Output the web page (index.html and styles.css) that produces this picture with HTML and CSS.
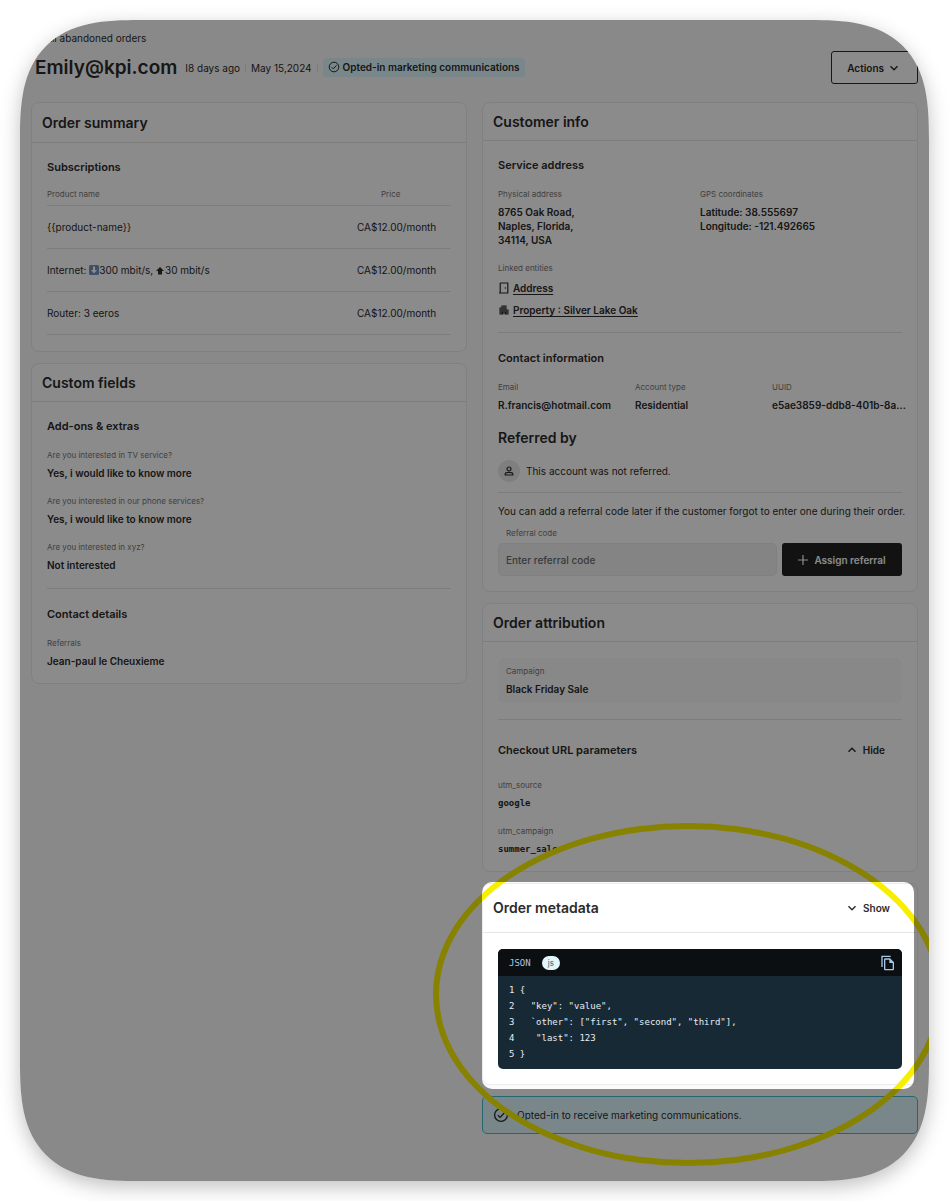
FILE: index.html
```html
<!DOCTYPE html>
<html lang="en">
<head>
<meta charset="utf-8">
<meta name="viewport" content="width=device-width, initial-scale=1">
<title>Abandoned order</title>
<link rel="stylesheet" href="styles.css">
</head>
<body>
<svg class="sprite" aria-hidden="true">
  <symbol id="check-circle" viewBox="0 0 24 24"><circle cx="12" cy="12" r="9.6" fill="none" stroke="currentColor" stroke-width="2"/><path d="M7.2 12.2l3.4 3.4 6.6-7" fill="none" stroke="currentColor" stroke-width="2"/></symbol>
  <symbol id="chevron" viewBox="0 0 10 10"><path d="M1.5 3.2L5 6.8l3.500-3.600" fill="none" stroke="currentColor" stroke-width="1.400"/></symbol>
</svg>
<main class="frame">
  <a class="back" href="#">All abandoned orders</a>
  <header class="top">
    <h1 class="title">Emily@kpi.com</h1>
    <span class="meta">I8 days ago</span>
    <span class="meta meta-split">May 15,2024</span>
    <span class="meta-split"><span class="badge"><svg class="icon-s"><use href="#check-circle"/></svg>Opted-in marketing communications</span></span>
    <button class="btn btn-outline" type="button">Actions<svg class="icon-xs"><use href="#chevron"/></svg></button>
  </header>

  <div class="columns">
    <div class="column">
      <section class="card summary">
        <h2 class="card-head">Order summary</h2>
        <div class="card-body">
          <h3 class="sub tight">Subscriptions</h3>
          <table class="items">
            <thead><tr><th>Product name</th><th class="price">Price</th></tr></thead>
            <tbody>
              <tr><td>{{product-name}}</td><td class="price">CA$12.00/month</td></tr>
              <tr><td>Internet: <svg class="emoji" viewBox="0 0 20 20"><rect width="20" height="20" rx="3" fill="#6f93bd"/><path d="M8 3h4v7h4l-6 7-6-7h4z" fill="#fff"/></svg>300 mbit/s, <svg class="arrow" viewBox="0 0 16 16"><path d="M8 0l8 8h-4v7H4V8H0z" fill="currentColor"/></svg>30 mbit/s</td><td class="price">CA$12.00/month</td></tr>
              <tr><td>Router: 3 eeros</td><td class="price">CA$12.00/month</td></tr>
            </tbody>
          </table>
        </div>
      </section>

      <section class="card">
        <h2 class="card-head">Custom fields</h2>
        <div class="card-body">
          <h3 class="sub">Add-ons &amp; extras</h3>
          <dl class="fields">
            <div><dt>Are you interested in TV service?</dt><dd>Yes, i would like to know more</dd></div>
            <div><dt>Are you interested in our phone services?</dt><dd>Yes, i would like to know more</dd></div>
            <div><dt>Are you interested in xyz?</dt><dd>Not interested</dd></div>
          </dl>
          <hr class="rule">
          <h3 class="sub">Contact details</h3>
          <dl class="fields">
            <div><dt>Referrals</dt><dd>Jean-paul le Cheuxieme</dd></div>
          </dl>
        </div>
      </section>
    </div>

    <div class="column">
      <section class="card">
        <h2 class="card-head">Customer info</h2>
        <div class="card-body">
          <h3 class="sub">Service address</h3>
          <dl class="fields two">
            <div><dt>Physical address</dt><dd>8765 Oak Road,<br>Naples, Florida,<br>34114, USA</dd></div>
            <div><dt>GPS coordinates</dt><dd>Latitude: 38.555697<br>Longitude: -121.492665</dd></div>
          </dl>
          <p class="label linked">Linked entities</p>
          <ul class="links">
            <li><svg class="icon-s" viewBox="0 0 12 12"><path d="M2.200 1h7.600v10H1m1.200 0V1M6.600 6h1.500" fill="none" stroke="currentColor" stroke-width="1.200"/></svg><a href="#">Address</a></li>
            <li><svg class="icon-s" viewBox="0 0 24 24"><path fill="currentColor" fill-rule="evenodd" d="M17 11V3H7v4H3v14h8v-4h2v4h8V11zM5 9v2h2V9zm0 4v2h2v-2zm0 4v2h2v-2zM9 5v2h2V5zm0 4v2h2V9zm0 4v2h2v-2zm4-8v2h2V5zm0 4v2h2V9zm0 4v2h2v-2zm4 0v2h2v-2zm0 4v2h2v-2z"/></svg><a href="#">Property : Silver Lake Oak</a></li>
          </ul>
          <hr class="rule rule-links">
          <h3 class="sub">Contact information</h3>
          <dl class="fields three">
            <div><dt>Email</dt><dd>R.francis@hotmail.com</dd></div>
            <div><dt>Account type</dt><dd>Residential</dd></div>
            <div><dt>UUID</dt><dd>e5ae3859-ddb8-401b-8a...</dd></div>
          </dl>
          <h2 class="referred">Referred by</h2>
          <p class="account"><span class="avatar"><svg class="icon-s" viewBox="0 0 12 12"><circle cx="6" cy="4" r="2" fill="none" stroke="currentColor" stroke-width="1.200"/><path d="M2.200 10V9.200C2.200 8 4.500 7.400 6 7.400S9.800 8 9.800 9.200v.8z" fill="none" stroke="currentColor" stroke-width="1.200"/></svg></span>This account was not referred.</p>
          <hr class="rule rule-tight">
          <p class="note">You can add a referral code later if the customer forgot to enter one during their order.</p>
          <label class="label code-label" for="referral">Referral code</label>
          <div class="form">
            <input class="input" id="referral" type="text" placeholder="Enter referral code">
            <button class="btn btn-dark" type="button"><svg class="icon-xs" viewBox="0 0 10 10"><path d="M5 0v10M0 5h10" stroke="currentColor" stroke-width="1.200"/></svg>Assign referral</button>
          </div>
        </div>
      </section>

      <section class="card">
        <h2 class="card-head">Order attribution</h2>
        <div class="card-body">
          <dl class="fields panel"><div><dt>Campaign</dt><dd>Black Friday Sale</dd></div></dl>
          <hr class="rule">
          <div class="params">
            <h3>Checkout URL parameters</h3>
            <button class="toggle" type="button"><svg class="icon-xs flip"><use href="#chevron"/></svg>Hide</button>
          </div>
          <dl class="fields mono">
            <div><dt>utm_source</dt><dd>google</dd></div>
            <div><dt>utm_campaign</dt><dd>summer_sale</dd></div>
          </dl>
        </div>
      </section>

      <section class="card focus">
        <div class="card-head card-head-tall">
          <h2>Order metadata</h2>
          <button class="toggle" type="button"><svg class="icon-xs"><use href="#chevron"/></svg>Show</button>
        </div>
        <div class="card-body">
          <div class="code">
            <div class="code-head">JSON <span class="pill">js</span>
              <button class="copy" type="button" aria-label="Copy"><svg viewBox="0 0 24 24"><path fill="currentColor" fill-rule="evenodd" d="M16 1H2v17h2V3h12zm-1 4H8c-1.100 0-1.990.9-1.990 2L6 21c0 1.100.89 2 1.990 2H19c1.100 0 2-.9 2-2V11zM8 21V7h6v5h5v9z"/></svg></button>
            </div>
            <pre class="code-body">1 {
2   "key": "value",
3   `other": ["first", "second", "third"],
4    "last": 123
5 }</pre>
          </div>
        </div>
        <div class="ring"></div>
        <div class="spotlight"></div>
      </section>

      <p class="alert"><svg class="icon-m"><use href="#check-circle"/></svg>Opted-in to receive marketing communications.</p>
    </div>
  </div>
</main>
</body>
</html>
```

FILE: styles.css
```css
* { box-sizing: border-box; }

body {
  margin: 0;
  padding: 20px;
  background: #fff;
  color: #2b2b2b;
  font: 10px/14px Inter, "Liberation Sans", sans-serif;
}

h1, h2, h3, p, dl, dd, ul, pre { margin: 0; }
ul { padding: 0; list-style: none; }
button, input { font: inherit; color: inherit; }
button { cursor: pointer; }
svg { flex: none; }

.sprite { position: absolute; width: 0; height: 0; }
.icon-xs { width: 10px; height: 10px; }
.icon-s { width: 12px; height: 12px; }
.icon-m { width: 16px; height: 16px; }
.flip { transform: rotate(180deg); }

.frame {
  position: relative;
  overflow: hidden;
  padding: 11px 11px 47px;
  border-radius: 87px;
  background: #fbfbfb;
  box-shadow: 0 6px 20px rgba(0, 0, 0, 0.25);
}

@supports (corner-shape: squircle) {
  .frame { border-radius: 120px; corner-shape: superellipse(1.5); }
}

.back {
  display: block;
  margin-left: 14px;
  color: inherit;
  text-decoration: none;
}

.top {
  display: flex;
  align-items: center;
  margin: 6px 0 18px 4px;
}

.title { margin-right: 8px; font-size: 19px; line-height: 24px; font-weight: 600; }
.meta { white-space: nowrap; }
.meta-split { display: flex; align-items: center; }
.meta-split::before {
  content: "";
  width: 1px;
  height: 10px;
  margin: 0 5px;
  background: #e4e4e4;
}

.badge {
  display: flex;
  align-items: center;
  gap: 3px;
  padding: 2px 5px 3px;
  border-radius: 3px;
  background: #e0f7fd;
  font-weight: 600;
  white-space: nowrap;
}

.btn {
  display: flex;
  align-items: center;
  justify-content: center;
  height: 33px;
  border-radius: 3px;
  font-weight: 600;
}
.btn-outline { gap: 5px; margin-left: auto; padding: 0 18px 0 15px; border: 1px solid #2b2b2b; background: #fff; }
.btn-dark { gap: 6px; flex: 0 0 120px; border: 0; background: #212121; color: #fff; }

.columns { display: grid; grid-template-columns: 1fr 1fr; gap: 15px; align-items: start; }
.column { display: flex; flex-direction: column; gap: 11px; min-width: 0; }

.card { border: 1px solid #ebebeb; border-radius: 8px; background: #fff; }
.card-head {
  padding: 9px 10px;
  border-bottom: 1px solid #e6e6e6;
  font-size: 14px;
  line-height: 19px;
  font-weight: 600;
}
.card-head-tall { display: flex; align-items: center; justify-content: space-between; padding: 14px 27px 15px 10px; }
.card-head-tall h2, .referred { font-size: 14px; line-height: 19px; font-weight: 600; }
.card-body { padding: 16px 15px 15px; }
.summary .card-head { padding: 10px; }
.summary .card-body { padding-bottom: 16px; }

.sub, .params h3 { font-size: 11px; line-height: 16px; font-weight: 600; }
.sub { margin-bottom: 14px; }
.tight { margin-bottom: 8px; }

.items { width: 100%; border-collapse: collapse; }
.items th, .items td { padding: 0; border-bottom: 1px solid #e6e6e6; text-align: left; }
.items th { height: 22px; color: #777; font-size: 8px; font-weight: 400; }
.items td { height: 43px; }
.items .price { width: 94px; }
.items th.price { padding-left: 24px; }
.emoji { width: 10px; height: 10px; vertical-align: -1px; }
.arrow { width: 8px; height: 8px; vertical-align: -1px; margin-right: 1px; }

.fields { display: grid; row-gap: 14px; }
.fields dt, .label { color: #777; font-size: 8px; line-height: 14px; }
.fields dd { margin-top: 4px; font-weight: 600; white-space: nowrap; }
.two { grid-template-columns: 1fr 1fr; }
.three { grid-template-columns: 1fr 1fr 1fr; column-gap: 7px; }
.three > div { min-width: 0; }
.mono dd { font-family: "DejaVu Sans Mono", monospace; font-size: 9px; }
.panel { padding: 6px 8px 7px; border-radius: 6px; background: #f9f9f9; }

.rule { height: 1px; margin: 16px 0 17px; border: 0; background: #e6e6e6; }
.rule-links { margin-top: 15px; }
.rule-tight { margin: 10px 0 11px; }

.linked { margin-top: 14px; }
.links { display: grid; gap: 8px; margin-top: 6px; }
.links li { display: flex; align-items: center; gap: 3px; }
.links a { color: inherit; font-weight: 600; text-decoration: underline; text-underline-offset: 2px; }

.referred { margin: 16px 0 13px; }
.account { display: flex; align-items: center; gap: 6px; }
.avatar { display: grid; place-items: center; width: 22px; height: 22px; border-radius: 50%; background: #e9e9e9; }
.note { white-space: nowrap; }
.code-label { display: block; margin: 8px 8px 3px; }
.form { display: flex; gap: 5px; }
.input {
  flex: 1;
  min-width: 0;
  height: 33px;
  padding: 0 7px;
  border: 1px solid #ebebeb;
  border-radius: 5px;
  background: #f3f3f3;
}
.input::placeholder { color: #6b6b6b; opacity: 1; font-weight: 500; }

.params { display: flex; align-items: center; justify-content: space-between; margin: 22px 17px 20px 0; }
.toggle { display: flex; align-items: center; gap: 6px; padding: 0; border: 0; background: none; font-size: 10px; line-height: 14px; font-weight: 600; }

.focus { position: relative; }

/* Dims everything in the frame except the metadata card. */
.spotlight {
  position: absolute;
  inset: -2px 3px -5px -1px;
  border-radius: 10px;
  box-shadow: 0 0 0 2000px rgba(0, 0, 0, 0.455);
  pointer-events: none;
  z-index: 2;
}
.ring {
  position: absolute;
  inset: -61px -26px -82px -50px;
  border: 6px solid #f8ef00;
  border-radius: 50%;
  pointer-events: none;
  z-index: 1;
}

.code { overflow: hidden; border-radius: 5px; background: #182936; color: #e6edf3; font-family: "DejaVu Sans Mono", monospace; font-size: 9px; }
.code-head { display: flex; align-items: center; gap: 11px; height: 27px; padding: 0 6px 0 11px; background: #0b0f12; color: #a9c7e4; }
.pill { padding: 0 6px; border-radius: 7px; background: #e0f7fd; color: #44545c; font-family: Inter, sans-serif; font-size: 8px; line-height: 14px; }
.copy { display: flex; margin-left: auto; padding: 0; border: 0; background: none; }
.copy svg { width: 16px; height: 16px; }
.code-body { padding: 6px 11px 7px; font: inherit; line-height: 16px; }

.alert { display: flex; align-items: center; gap: 8px; padding: 10px; border: 1px solid #45bccb; border-radius: 5px; background: #e0f7fd; }
```
